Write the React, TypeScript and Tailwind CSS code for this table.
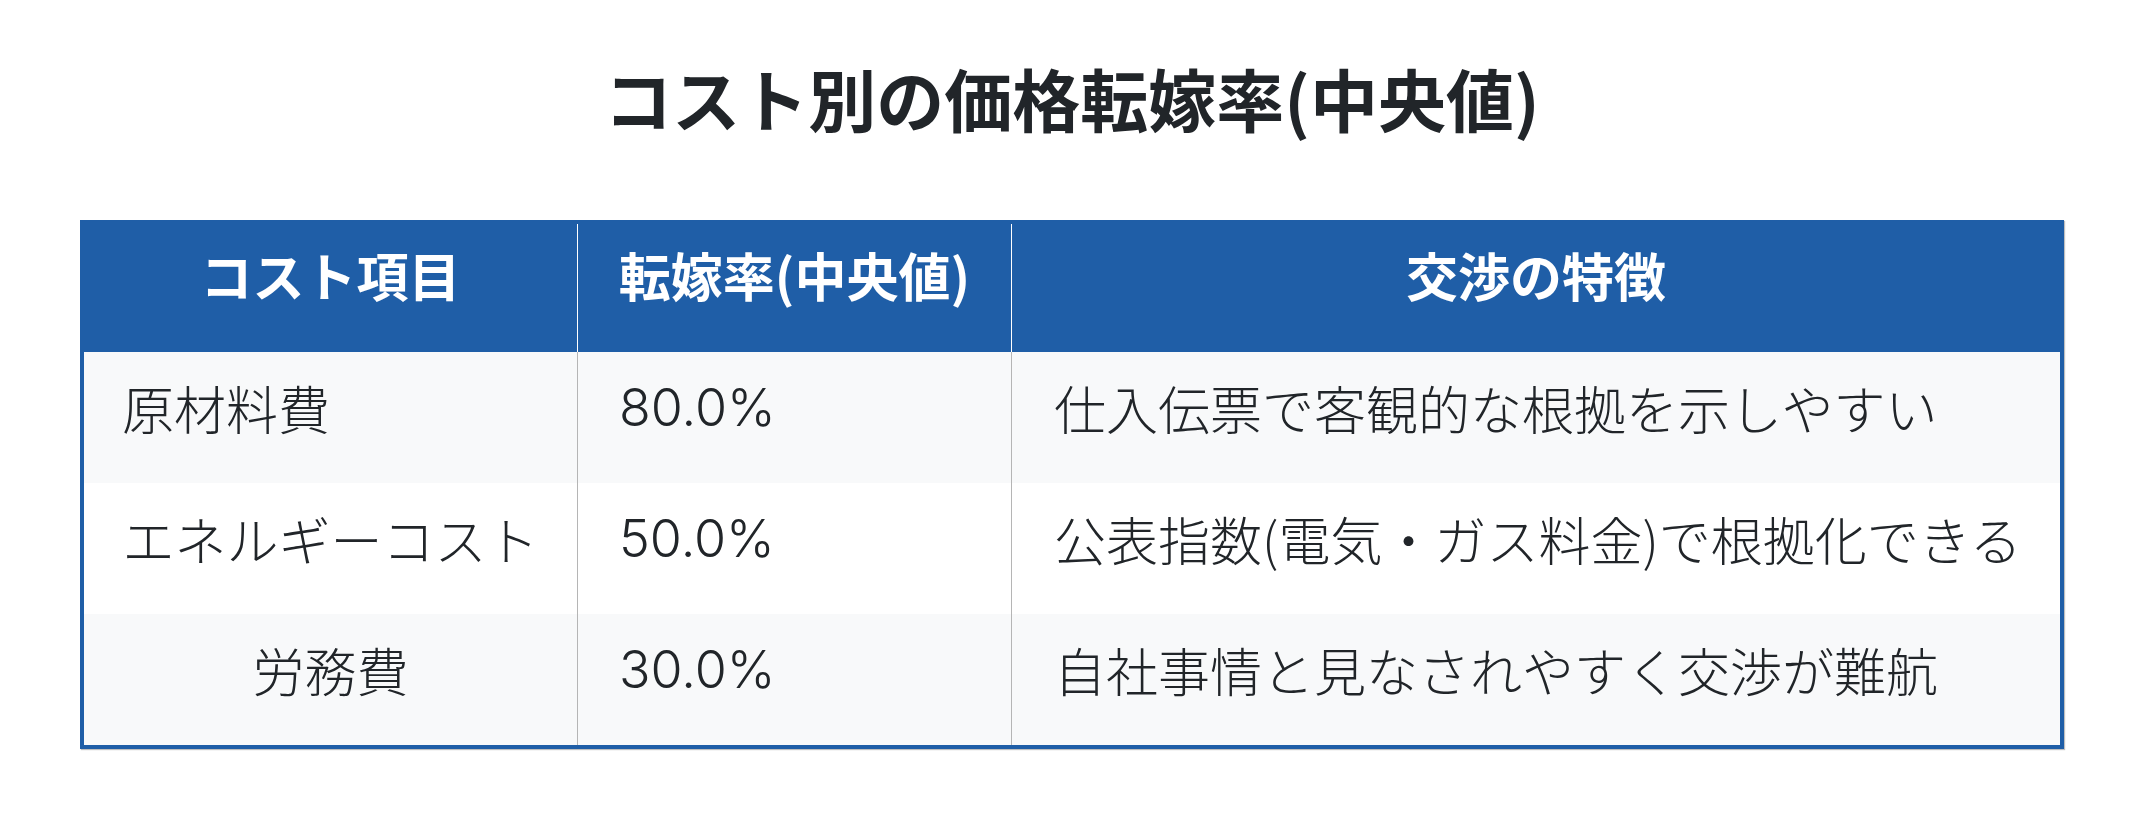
const rows = [
  { item: "原材料費", rate: "80.0%", note: "仕入伝票で客観的な根拠を示しやすい", align: "left" },
  { item: "エネルギーコスト", rate: "50.0%", note: "公表指数(電気・ガス料金)で根拠化できる", align: "center" },
  { item: "労務費", rate: "30.0%", note: "自社事情と見なされやすく交渉が難航", align: "center" },
];

export default function App() {
  return (
    <div className="min-h-screen bg-white pt-[64px] pb-[80px] font-['Noto_Sans_CJK_JP','Noto_Sans',sans-serif] text-[#212529]">
      {/* Title */}
      <h1 className="text-center text-[68px] font-bold leading-[68px]">
        コスト別の価格転嫁率(中央値)
      </h1>

      {/* Table */}
      <div className="mx-[80px] mt-[88px] border-4 border-[#1f5ea7] shadow-[1px_1px_1px_rgba(0,0,0,0.25)]">
        <div className="grid grid-cols-[493px_434px_1fr] bg-[#1f5ea7] text-[52px] font-bold leading-[52px] text-white">
          <div className="pt-[25px] pb-[51px] text-center">コスト項目</div>
          <div className="border-l border-white pt-[25px] pb-[51px] text-center">転嫁率(中央値)</div>
          <div className="border-l border-white pt-[25px] pb-[51px] text-center">交渉の特徴</div>
        </div>
        {rows.map((row, i) => (
          <div
            key={row.item}
            className={`grid grid-cols-[493px_434px_1fr] text-[52px] font-light leading-[52px] ${
              i % 2 === 0 ? "bg-[#f8f9fa]" : "bg-white"
            }`}
          >
            <div
              className={`pt-[30px] pb-[49px] whitespace-nowrap ${
                row.align === "left" ? "pl-[38px] text-left" : "text-center"
              }`}
            >
              {row.item}
            </div>
            <div className="border-l border-[#b5b5b5] pt-[30px] pb-[49px] pl-[41px] font-['Inter','Noto_Sans_CJK_JP',sans-serif]">
              {row.rate}
            </div>
            <div className="border-l border-[#b5b5b5] pt-[30px] pb-[49px] pl-[42px] whitespace-nowrap">
              {row.note}
            </div>
          </div>
        ))}
      </div>
    </div>
  );
}
